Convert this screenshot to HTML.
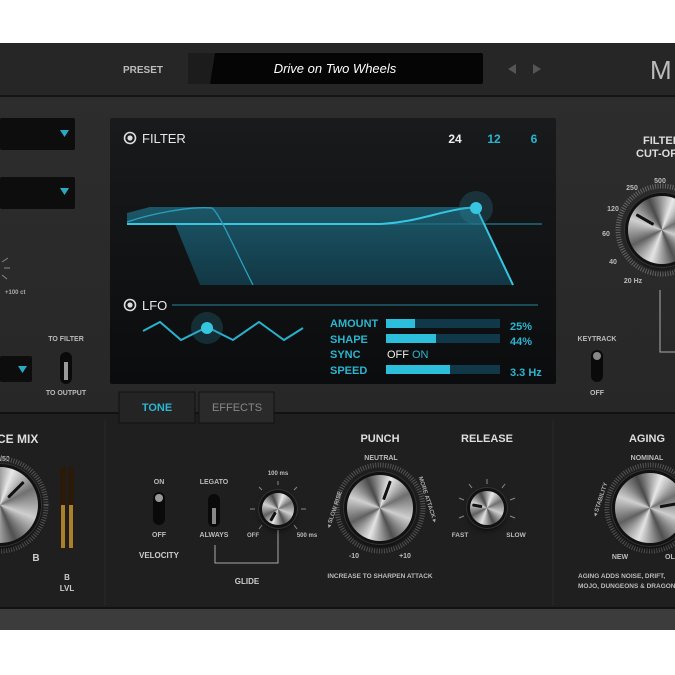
<!DOCTYPE html>
<html><head><meta charset="utf-8"><style>
*{margin:0;padding:0;box-sizing:border-box}
body{width:675px;height:675px;background:#fff;position:relative;overflow:hidden;font-family:"Liberation Sans",sans-serif}
.abs{position:absolute}
.knob{position:absolute;border-radius:50%;background:conic-gradient(from 20deg,#e8e8e8,#707070 12%,#cfcfcf 25%,#505050 38%,#e4e4e4 50%,#606060 62%,#d0d0d0 75%,#4a4a4a 88%,#e8e8e8);box-shadow:0 0 0 3px #111,0 0 0 4px #333,0 4px 8px #000}
.rot{position:absolute;left:0;top:0;width:100%;height:100%}
.rot i{position:absolute;left:calc(50% - 1.5px);top:6%;width:3px;height:30%;background:#111;border-radius:1px}
svg text{font-family:"Liberation Sans",sans-serif;font-weight:bold}
</style></head><body>
<svg class="abs" style="left:0;top:0" width="675" height="675" viewBox="0 0 675 675">
<defs>
<linearGradient id="up" x1="0" y1="0" x2="0" y2="1"><stop offset="0" stop-color="#2d2d2d"/><stop offset="1" stop-color="#272727"/></linearGradient>
<linearGradient id="disp" x1="0" y1="0" x2="0" y2="1"><stop offset="0" stop-color="#181a1c"/><stop offset="1" stop-color="#0b0c0d"/></linearGradient>
<linearGradient id="fill" x1="0" y1="0" x2="0" y2="1"><stop offset="0" stop-color="#1d6275" stop-opacity=".85"/><stop offset="1" stop-color="#123e4d" stop-opacity=".85"/></linearGradient>
</defs>
<rect x="0" y="43" width="675" height="53" fill="#262626"/>
<rect x="0" y="95" width="675" height="2" fill="#141414"/>
<rect x="0" y="97" width="675" height="317" fill="url(#up)"/>
<rect x="0" y="413" width="675" height="196" fill="#1f1f1f"/>
<rect x="0" y="412" width="675" height="2" fill="#121212"/>
<rect x="0" y="607" width="675" height="2" fill="#121212"/>
<rect x="0" y="609" width="675" height="21" fill="#3c3c3c"/>
<line x1="105" y1="420" x2="105" y2="605" stroke="#292929"/>
<line x1="553" y1="420" x2="553" y2="605" stroke="#292929"/>
<text x="123" y="73" fill="#bbb" font-size="10">PRESET</text>
<rect x="188" y="53" width="295" height="31" rx="2" fill="#050505"/>
<polygon points="188,53 215,53 210,84 188,84" fill="#1c1c1c"/>
<text x="335" y="73" fill="#fff" font-size="13" font-style="italic" text-anchor="middle" style="font-weight:normal">Drive on Two Wheels</text>
<polygon points="516,64 516,74 508,69" fill="#555"/>
<polygon points="533,64 533,74 541,69" fill="#555"/>
<text x="650" y="79" fill="#bbb" font-size="26" style="font-weight:normal">M</text>
<rect x="0" y="118" width="75" height="32" rx="2" fill="#0d0d0d"/>
<polygon points="60,130 69,130 64.5,137" fill="#2aa9c4"/>
<rect x="0" y="177" width="75" height="32" rx="2" fill="#0d0d0d"/>
<polygon points="60,188 69,188 64.5,195" fill="#2aa9c4"/>
<rect x="0" y="356" width="32" height="26" rx="2" fill="#0d0d0d"/>
<polygon points="18,366 27,366 22.5,373" fill="#2aa9c4"/>
<g stroke="#888" stroke-width="1"><line x1="2" y1="262" x2="8" y2="258"/><line x1="4" y1="268" x2="10" y2="268"/><line x1="2" y1="275" x2="7" y2="279"/></g>
<text x="5" y="294" fill="#aaa" font-size="6">+100 ct</text>
<text x="66" y="341" fill="#bbb" font-size="7" text-anchor="middle">TO FILTER</text>
<text x="66" y="395" fill="#bbb" font-size="7" text-anchor="middle">TO OUTPUT</text>
<rect x="60" y="352" width="12" height="32" rx="6" fill="#0a0a0a"/>
<rect x="64" y="362" width="4" height="18" fill="#999"/>
<rect x="110" y="118" width="446" height="266" rx="2" fill="url(#disp)"/>
<circle cx="130" cy="138" r="5.5" fill="none" stroke="#ddd" stroke-width="1.6"/><circle cx="130" cy="138" r="2.6" fill="#ddd"/>
<text x="142" y="143" fill="#e8e8e8" font-size="13" style="font-weight:normal">FILTER</text>
<text x="455" y="143" fill="#eee" font-size="12" text-anchor="middle">24</text>
<text x="494" y="143" fill="#2bb5d0" font-size="12" text-anchor="middle">12</text>
<text x="534" y="143" fill="#2bb5d0" font-size="12" text-anchor="middle">6</text>
<polygon points="127,213 150,207 476,207 513,285 200,285 175,224 127,224" fill="url(#fill)"/>
<line x1="127" y1="224" x2="542" y2="224" stroke="#1f6c80" stroke-width="1.5"/>
<path d="M127,224 L380,224 C420,222 440,210 476,207" fill="none" stroke="#36c6e2" stroke-width="2"/>
<path d="M127,222 C150,214 190,206 212,208 C220,214 235,250 253,285" fill="none" stroke="#2a9fbd" stroke-width="1.3"/>
<line x1="476" y1="207" x2="513" y2="285" stroke="#36c6e2" stroke-width="2"/>
<circle cx="476" cy="208" r="17" fill="#2a8aa3" opacity=".25"/>
<circle cx="476" cy="208" r="6" fill="#36c6e2"/>
<circle cx="130" cy="305" r="5.5" fill="none" stroke="#ddd" stroke-width="1.6"/><circle cx="130" cy="305" r="2.6" fill="#ddd"/>
<text x="142" y="310" fill="#e8e8e8" font-size="13" style="font-weight:normal">LFO</text>
<line x1="172" y1="305" x2="538" y2="305" stroke="#1f5f70" stroke-width="1.5"/>
<path d="M143,331 L160,322 L181,340 L207,327 L233,340 L259,322 L284,340 L303,328" fill="none" stroke="#2ab0cc" stroke-width="2"/>
<circle cx="207" cy="328" r="16" fill="#2a8aa3" opacity=".25"/>
<circle cx="207" cy="328" r="6" fill="#36c6e2"/>
<g font-size="11" fill="#2bb5d0" style="font-weight:normal">
<text x="330" y="327">AMOUNT</text><text x="330" y="343">SHAPE</text><text x="330" y="358">SYNC</text><text x="330" y="374">SPEED</text>
<text x="510" y="330">25%</text><text x="510" y="345">44%</text><text x="510" y="376">3.3 Hz</text>
</g>
<text x="387" y="358" fill="#eee" font-size="11" style="font-weight:normal">OFF</text>
<text x="412" y="358" fill="#2bb5d0" font-size="11" style="font-weight:normal">ON</text>
<rect x="386" y="319" width="114" height="9" fill="#103848"/><rect x="386" y="319" width="29" height="9" fill="#2bbfdc"/>
<rect x="386" y="334" width="114" height="9" fill="#103848"/><rect x="386" y="334" width="50" height="9" fill="#2bbfdc"/>
<rect x="386" y="365" width="114" height="9" fill="#103848"/><rect x="386" y="365" width="64" height="9" fill="#2bbfdc"/>
<rect x="119" y="392" width="76" height="31" fill="#242424" stroke="#111"/>
<rect x="199" y="392" width="75" height="31" fill="#2a2a2a" stroke="#111"/>
<text x="157" y="411" fill="#2bb5d0" font-size="11" text-anchor="middle">TONE</text>
<text x="237" y="411" fill="#888" font-size="11" text-anchor="middle" style="font-weight:normal">EFFECTS</text>
<text x="643" y="144" fill="#ddd" font-size="11">FILTER</text>
<text x="636" y="157" fill="#ddd" font-size="11">CUT-OFF</text>
<g fill="#bbb" font-size="7"><text x="660" y="183" text-anchor="middle">500</text><text x="632" y="190" text-anchor="middle">250</text><text x="613" y="211" text-anchor="middle">120</text><text x="606" y="236" text-anchor="middle">60</text><text x="613" y="264" text-anchor="middle">40</text><text x="633" y="283" text-anchor="middle">20 Hz</text></g>
<circle cx="662" cy="230" r="44" fill="none" stroke="#666" stroke-width="5" stroke-dasharray="1 1.5"/>
<text x="597" y="341" fill="#bbb" font-size="7" text-anchor="middle">KEYTRACK</text>
<text x="597" y="395" fill="#bbb" font-size="7" text-anchor="middle">OFF</text>
<rect x="591" y="350" width="12" height="32" rx="6" fill="#0a0a0a"/>
<circle cx="597" cy="356" r="4" fill="#888"/>
<path d="M660,290 L660,352 L675,352" fill="none" stroke="#aaa" stroke-width="1"/>
<text x="-3" y="443" fill="#ddd" font-size="12">CE MIX</text>
<text x="0" y="461" fill="#bbb" font-size="7">/50</text>
<circle cx="0" cy="505" r="46" fill="none" stroke="#555" stroke-width="5" stroke-dasharray="1 1.5"/>
<rect x="60" y="467" width="6" height="82" fill="#2a1a0a"/><rect x="68" y="467" width="6" height="82" fill="#2a1a0a"/>
<rect x="61" y="505" width="4" height="43" fill="#c89b3a" opacity=".8"/><rect x="69" y="505" width="4" height="43" fill="#c89b3a" opacity=".8"/>
<text x="36" y="561" fill="#ccc" font-size="10" text-anchor="middle">B</text>
<text x="67" y="580" fill="#ccc" font-size="8" text-anchor="middle">B</text>
<text x="67" y="591" fill="#ccc" font-size="8" text-anchor="middle">LVL</text>
<g fill="#bbb" font-size="7">
<text x="159" y="484" text-anchor="middle">ON</text><text x="159" y="537" text-anchor="middle">OFF</text>
<text x="214" y="484" text-anchor="middle">LEGATO</text><text x="214" y="537" text-anchor="middle">ALWAYS</text>
<text x="278" y="475" text-anchor="middle" font-size="6">100 ms</text><text x="253" y="537" text-anchor="middle" font-size="6">OFF</text><text x="307" y="537" text-anchor="middle" font-size="6">500 ms</text>
</g>
<text x="159" y="558" fill="#ccc" font-size="8" text-anchor="middle">VELOCITY</text>
<text x="247" y="584" fill="#ccc" font-size="8" text-anchor="middle">GLIDE</text>
<rect x="153" y="492" width="12" height="33" rx="6" fill="#0a0a0a"/><circle cx="159" cy="498" r="4" fill="#999"/>
<rect x="208" y="494" width="12" height="33" rx="6" fill="#0a0a0a"/><rect x="212" y="508" width="4" height="16" fill="#888"/>
<path d="M215,545 L215,563 L278,563 L278,530" fill="none" stroke="#aaa"/>
<g stroke="#888"><line x1="278" y1="485" x2="278" y2="481"/><line x1="262" y1="490" x2="259" y2="487"/><line x1="294" y1="490" x2="297" y2="487"/><line x1="255" y1="509" x2="250" y2="509"/><line x1="301" y1="509" x2="306" y2="509"/><line x1="262" y1="525" x2="259" y2="529"/><line x1="294" y1="525" x2="297" y2="529"/></g>
<text x="380" y="442" fill="#ddd" font-size="11" text-anchor="middle">PUNCH</text>
<text x="381" y="460" fill="#bbb" font-size="7" text-anchor="middle">NEUTRAL</text>
<circle cx="380" cy="508" r="43" fill="none" stroke="#555" stroke-width="5" stroke-dasharray="1 1.5"/>
<text x="336" y="510" fill="#aaa" font-size="6" transform="rotate(-72 336 510)" text-anchor="middle">◂ SLOW RISE</text>
<text x="426" y="500" fill="#aaa" font-size="6" transform="rotate(72 426 500)" text-anchor="middle">MORE ATTACK ▸</text>
<text x="354" y="558" fill="#bbb" font-size="7" text-anchor="middle">-10</text><text x="405" y="558" fill="#bbb" font-size="7" text-anchor="middle">+10</text>
<text x="380" y="578" fill="#bbb" font-size="6.5" text-anchor="middle">INCREASE TO SHARPEN ATTACK</text>
<text x="487" y="442" fill="#ddd" font-size="11" text-anchor="middle">RELEASE</text>
<g stroke="#888"><line x1="487" y1="484" x2="487" y2="479"/><line x1="472" y1="488" x2="469" y2="484"/><line x1="502" y1="488" x2="505" y2="484"/><line x1="464" y1="500" x2="459" y2="498"/><line x1="510" y1="500" x2="515" y2="498"/><line x1="464" y1="516" x2="459" y2="518"/><line x1="510" y1="516" x2="515" y2="518"/></g>
<text x="460" y="537" fill="#bbb" font-size="6.5" text-anchor="middle">FAST</text><text x="516" y="537" fill="#bbb" font-size="6.5" text-anchor="middle">SLOW</text>
<text x="647" y="442" fill="#ddd" font-size="11" text-anchor="middle">AGING</text>
<text x="647" y="460" fill="#bbb" font-size="7" text-anchor="middle">NOMINAL</text>
<circle cx="650" cy="508" r="43" fill="none" stroke="#555" stroke-width="5" stroke-dasharray="1 1.5"/>
<text x="602" y="500" fill="#aaa" font-size="6" transform="rotate(-72 602 500)" text-anchor="middle">◂ STABILITY</text>
<text x="620" y="559" fill="#bbb" font-size="7" text-anchor="middle">NEW</text><text x="665" y="559" fill="#bbb" font-size="7">OLD</text>
<text x="578" y="578" fill="#bbb" font-size="6.5">AGING ADDS NOISE, DRIFT,</text>
<text x="578" y="588" fill="#bbb" font-size="6.5">MOJO, DUNGEONS &amp; DRAGONS</text>
</svg>
<div class="knob" style="left:628px;top:196px;width:68px;height:68px"><div class="rot" style="transform:rotate(-60deg)"><i></i></div></div>
<div class="knob" style="left:-38px;top:467px;width:76px;height:76px"><div class="rot" style="transform:rotate(45deg)"><i></i></div></div>
<div class="knob" style="left:262px;top:493px;width:32px;height:32px"><div class="rot" style="transform:rotate(210deg)"><i></i></div></div>
<div class="knob" style="left:347px;top:475px;width:66px;height:66px"><div class="rot" style="transform:rotate(20deg)"><i></i></div></div>
<div class="knob" style="left:470px;top:491px;width:34px;height:34px"><div class="rot" style="transform:rotate(-80deg)"><i></i></div></div>
<div class="knob" style="left:615px;top:473px;width:70px;height:70px"><div class="rot" style="transform:rotate(80deg)"><i></i></div></div>
</body></html>
